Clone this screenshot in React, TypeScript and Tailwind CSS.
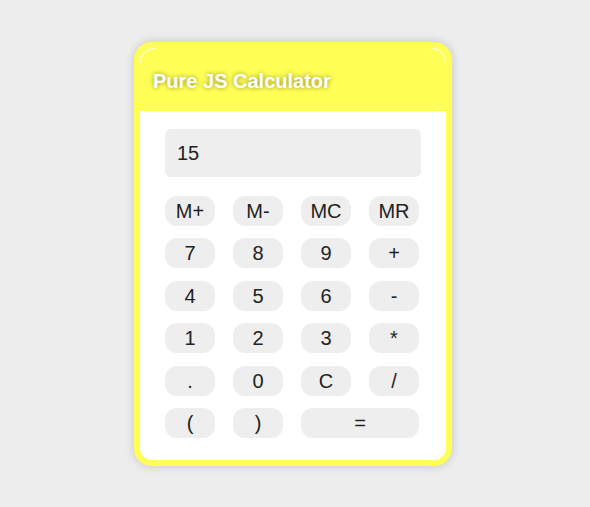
import React from "react";

const rows: string[][] = [
  ["M+", "M-", "MC", "MR"],
  ["7", "8", "9", "+"],
  ["4", "5", "6", "-"],
  ["1", "2", "3", "*"],
  [".", "0", "C", "/"],
];

function Btn({ label, wide }: { label: string; wide?: boolean }) {
  return (
    <button
      className={
        "h-[30px] rounded-[12px] bg-[#eeeeee] text-[20px] leading-none text-[#222222] flex items-center justify-center " +
        (wide ? "col-span-2" : "")
      }
    >
      {label}
    </button>
  );
}

export default function App() {
  return (
    <div
      className="min-h-screen w-full bg-[#ededed] pt-[42px]"
      style={{ fontFamily: '"Liberation Sans", Arial, sans-serif' }}
    >
      <div className="w-[318px] ml-[134px] rounded-[18px] border-[6px] border-[#ffff55] bg-white overflow-hidden shadow-[0_0_10px_rgba(0,0,0,0.18)]">
        <div className="relative h-[63px] bg-[#ffff55] flex items-center pl-[13px]">
          <div className="absolute left-0 top-0 w-[15px] h-[15px] rounded-tl-[15px] border-t-[1.5px] border-l-[1.5px] border-white/90" />
          <div className="absolute right-0 top-0 w-[15px] h-[15px] rounded-tr-[15px] border-t-[1.5px] border-r-[1.5px] border-white/90" />
          <h1 className="text-[20px] leading-none font-bold text-white mt-[2px] [text-shadow:0_0_5px_rgba(0,0,0,0.45)]">
            Pure JS Calculator
          </h1>
        </div>
        <div className="pt-[18px] pb-[22px] pl-[25px]">
          <div className="w-[256px] h-[48px] rounded-[6px] bg-[#eeeeee] flex items-center pl-[12px] text-[20px] text-[#222222]">
            15
          </div>
          <div className="mt-[19px] w-[254px] grid grid-cols-4 gap-x-[18px] gap-y-[12.4px]">
            {rows.flat().map((l, i) => (
              <Btn key={i} label={l} />
            ))}
            <Btn label="(" />
            <Btn label=")" />
            <Btn label="=" wide />
          </div>
        </div>
      </div>
    </div>
  );
}
